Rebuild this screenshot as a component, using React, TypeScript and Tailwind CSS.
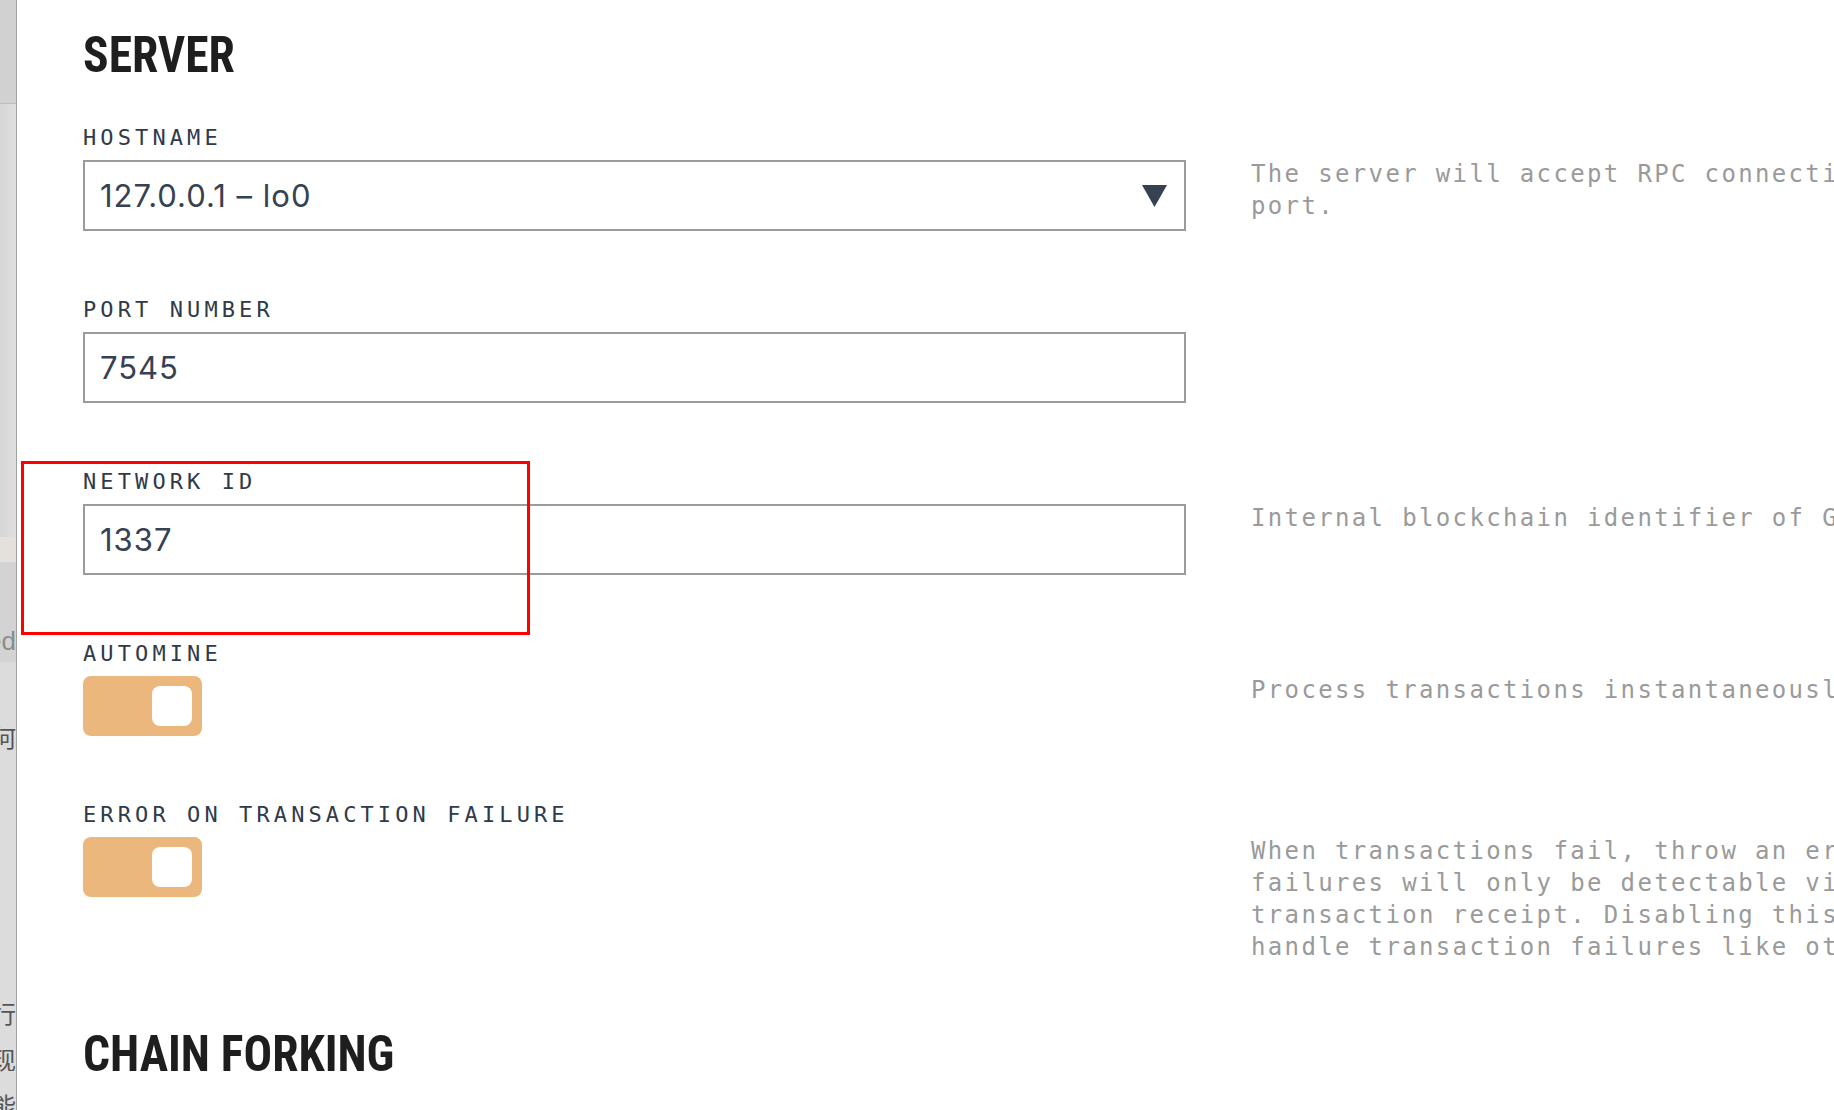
import * as React from "react";

const mono = "font-['DejaVu_Sans_Mono','Liberation_Mono',monospace]";

type Field = {
  label: string;
  kind: "select" | "input" | "toggle";
  value?: string;
  description?: string;
};

const fields: Field[] = [
  {
    label: "HOSTNAME",
    kind: "select",
    value: "127.0.0.1 – lo0",
    description: "The server will accept RPC connections on the following host and port."
  },
  { label: "PORT NUMBER", kind: "input", value: "7545" },
  {
    label: "NETWORK ID",
    kind: "input",
    value: "1337",
    description: "Internal blockchain identifier of Ganache server."
  },
  {
    label: "AUTOMINE",
    kind: "toggle",
    description: "Process transactions instantaneously."
  },
  {
    label: "ERROR ON TRANSACTION FAILURE",
    kind: "toggle",
    description:
      'When transactions fail, throw an error. If disabled, transaction failures will only be detectable via the "status" flag in the transaction receipt. Disabling this option will make Ganache handle transaction failures like other Ethereum clients.'
  }
];

function Heading({ children }: { children: React.ReactNode }) {
  return (
    <h2 className="h-[50px] text-[50px] leading-[50px] font-bold text-[#1e1e1e] font-['Roboto_Condensed','Roboto',sans-serif]">
      <span className="inline-block origin-left scale-x-[0.95] whitespace-nowrap">{children}</span>
    </h2>
  );
}

function Toggle() {
  return (
    <div className="flex h-[60px] w-[119px] items-center justify-end rounded-[8px] bg-[#ebb77d] pr-[10px]">
      <div className="h-[40px] w-[40px] rounded-[8px] bg-white" />
    </div>
  );
}

function TextBox({ value, select }: { value: string; select?: boolean }) {
  return (
    <div className="flex h-[71px] items-center justify-between border-2 border-[#9b9b9b] bg-white pl-[15px] pr-[17px]">
      <span className="text-[31px] leading-none tracking-[1px] text-[#364152] font-['Inter','Noto_Sans',sans-serif]">
        {value}
      </span>
      {select ? (
        <svg width="25" height="22" viewBox="0 0 25 22">
          <polygon points="0,0 25,0 12.5,22" fill="#364152" />
        </svg>
      ) : null}
    </div>
  );
}

function Row({ field }: { field: Field }) {
  const isToggle = field.kind === "toggle";
  return (
    <div className="grid grid-cols-[1103px_1110px] gap-x-[65px]">
      <div className="col-start-1 mb-[11px]">
        <span className={`${mono} block text-[22px] leading-[22px] tracking-[4.1px] text-[#2f3a4a] whitespace-nowrap`}>
          {field.label}
        </span>
      </div>
      <div />
      <div>
        {isToggle ? (
          <Toggle />
        ) : (
          <TextBox value={field.value ?? ""} select={field.kind === "select"} />
        )}
      </div>
      {/* description may run past the control; keep the row at control height */}
      <div className={isToggle ? "h-[60px]" : "h-[71px]"}>
        <p className={`${mono} -mt-[2px] text-[24px] leading-[32px] tracking-[2.35px] text-[#9a9a9a]`}>
          {field.description}
        </p>
      </div>
    </div>
  );
}

function SideStrip() {
  // slice of the window behind, with its text cut off
  const cjk = "font-['Noto_Sans_CJK_SC',sans-serif]";
  return (
    <div className="flex h-full w-[17px] shrink-0 flex-col overflow-hidden border-r border-[#a2a2a2] bg-[#dcdcdc]">
      <div className="h-[104px] shrink-0 border-b border-[#bdbdbd] bg-[#d1d1d1]" />
      <div className="h-[433px] shrink-0 bg-gradient-to-r from-[#d6d6d6] to-[#e0e0e0]" />
      <div className="h-[25px] shrink-0 bg-[#e4e1dc]" />
      <div className="flex h-[100px] shrink-0 items-end justify-end bg-[#d3d3d3] pb-[6px]">
        <span className="whitespace-nowrap text-[26px] leading-[30px] text-[#8c8c8c] font-['Liberation_Sans',sans-serif]">
          Used
        </span>
      </div>
      <div className="flex h-[90px] shrink-0 items-end justify-end">
        <span className={`${cjk} whitespace-nowrap text-[24px] leading-[30px] text-[#555]`}>然而何</span>
      </div>
      <div className="h-[245px] shrink-0" />
      <div className="flex shrink-0 flex-col items-end gap-[14px]">
        <span className={`${cjk} whitespace-nowrap text-[24px] leading-[32px] text-[#555]`}>行进行</span>
        <span className={`${cjk} whitespace-nowrap text-[24px] leading-[32px] text-[#555]`}>现实现</span>
        <span className={`${cjk} whitespace-nowrap text-[24px] leading-[32px] text-[#555]`}>功能</span>
      </div>
    </div>
  );
}

export default function App() {
  return (
    <div className="relative flex h-[1110px] w-[1834px] overflow-hidden bg-white">
      <SideStrip />
      <main className="flex shrink-0 flex-col pl-[66px] pt-[30px]">
        <Heading>SERVER</Heading>
        <div className="mt-[47px] flex flex-col gap-[68px]">
          {fields.map((f) => (
            <Row key={f.label} field={f} />
          ))}
        </div>
        <div className="mt-[132px]">
          <Heading>CHAIN FORKING</Heading>
        </div>
      </main>
      {/* annotation box drawn over the screenshot */}
      <div className="pointer-events-none absolute left-[21px] top-[461px] h-[174px] w-[509px] border-[3px] border-[#ff0000]" />
    </div>
  );
}
